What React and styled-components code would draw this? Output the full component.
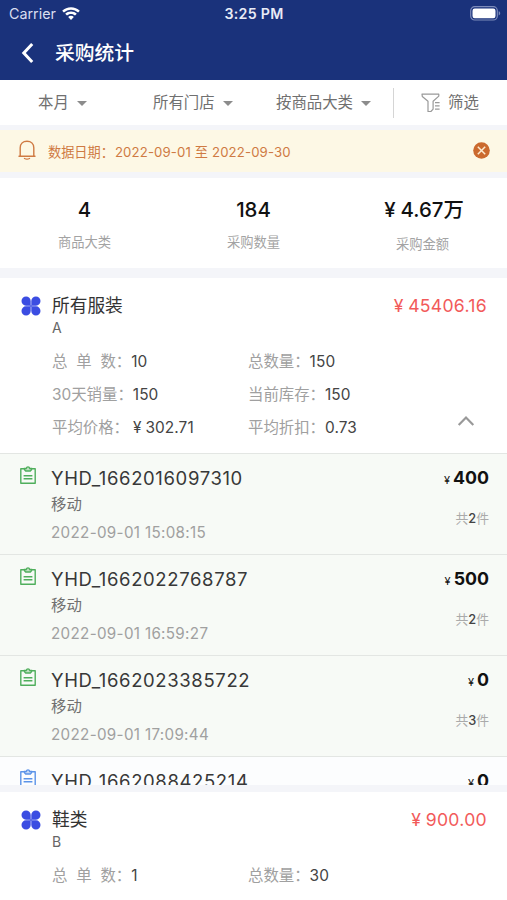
import React from 'react'
import styled, { createGlobalStyle } from 'styled-components'

const filters = [
    { label: '本月', width: 124, pad: 38 },
    { label: '所有门店', width: 138, pad: 29 },
    { label: '按商品大类', width: 131, pad: 14 },
]

const stats = [
    { value: '4', label: '商品大类' },
    { value: '184', label: '采购数量' },
    { value: '4.67万', label: '采购金额', money: true },
]

const categories = [
    {
        name: '所有服装',
        code: 'A',
        amount: '45406.16',
        open: true,
        fields: [
            { label: '总 单 数：', value: '10', spaced: true },
            { label: '总数量：', value: '150' },
            { label: '30天销量：', value: '150' },
            { label: '当前库存：', value: '150' },
            { label: '平均价格：', value: '302.71', money: true },
            { label: '平均折扣：', value: '0.73' },
        ],
        orders: [
            { id: 'YHD_1662016097310', type: '移动', time: '2022-09-01 15:08:15', amount: '400', count: 2 },
            { id: 'YHD_1662022768787', type: '移动', time: '2022-09-01 16:59:27', amount: '500', count: 2 },
            { id: 'YHD_1662023385722', type: '移动', time: '2022-09-01 17:09:44', amount: '0', count: 3 },
            { id: 'YHD_1662088425214', amount: '0', pending: true },
        ],
    },
    {
        name: '鞋类',
        code: 'B',
        amount: '900.00',
        fields: [
            { label: '总 单 数：', value: '1', spaced: true },
            { label: '总数量：', value: '30' },
        ],
        orders: [],
    },
]

const WifiIcon = () => (
    <svg width="18" height="14" viewBox="0 0 18 14" fill="#fff">
        <path d="M9 0.3C5.6 0.3 2.5 1.6 0.2 3.8L1.9 5.6C3.8 3.8 6.3 2.7 9 2.7s5.2 1.1 7.1 2.9l1.7-1.8C15.5 1.6 12.4 0.3 9 0.3z" />
        <path d="M9 4.5C6.7 4.5 4.7 5.4 3.2 6.8L5 8.6C6 7.6 7.4 7 9 7s3 .6 4 1.6l1.8-1.8C13.3 5.4 11.3 4.5 9 4.5z" />
        <path d="M9 8.800c-1.100 0-2.100.4-2.800 1.100L9 13l2.800-3.100C11.100 9.200 10.100 8.800 9 8.800z" />
    </svg>
)

const BatteryIcon = () => (
    <svg width="31" height="15" viewBox="0 0 31 15" fill="none">
        <rect x="0.7" y="0.7" width="26.6" height="13.3" rx="4" stroke="#7d8bba" strokeWidth="1.2" />
        <rect x="2.5" y="2.5" width="23" height="9.7" rx="2.2" fill="#fff" />
        <path d="M28.7 5.2v4.300c1-.4 1.500-1.200 1.500-2.150s-.5-1.750-1.500-2.150z" fill="#7d8bba" />
    </svg>
)

const BackIcon = () => (
    <svg width="14" height="22" viewBox="0 0 14 22" fill="none">
        <path d="M12.200 2L3.800 11l8.400 9" stroke="#fff" strokeWidth="3" />
    </svg>
)

const FunnelIcon = () => (
    <svg width="20" height="20" viewBox="0 0 20 20" fill="none" stroke="#999" strokeWidth="1.2">
        <path d="M1 1.200h16.800v1.900l-5.700 5.200v7.900l-2.200 2.300H7V8.300L1.300 3.500z" strokeLinejoin="round" />
        <path d="M14 9.700h4.600M14 12.900h4.600M14 16.100h4.600" />
    </svg>
)

const BellIcon = () => (
    <svg width="18" height="20" viewBox="0 0 18 20" fill="none" stroke="#cf7a43" strokeWidth="1.4">
        <path d="M1 16.200h16M2.200 16.200V7.800C2.200 3.700 5 1.200 9 1.200s6.800 2.500 6.800 6.600v8.400" strokeLinecap="round" />
        <path d="M6.500 18.500c1.500.8 3.500.8 5 0" strokeLinecap="round" />
    </svg>
)

const CloseIcon = () => (
    <svg width="17" height="17" viewBox="0 0 17 17">
        <circle cx="8.5" cy="8.5" r="8.3" fill="#cb6a2e" />
        <path d="M4.800 4.800l7.400 7.400M12.200 4.800l-7.400 7.400" stroke="#fdebd0" strokeWidth="1.5" />
    </svg>
)

const CloverIcon = () => (
    <svg width="20" height="20" viewBox="0 0 20 20" fill="#3b4de2">
        <path d="M9.700 9.700H5A4.600 4.600 0 1 1 9.700 5zM10.300 9.700V5A4.600 4.600 0 1 1 15 9.700zM9.700 10.300V15A4.600 4.600 0 1 1 5 10.300zM10.300 10.300H15A4.600 4.600 0 1 1 10.300 15z" />
        <path d="M9 9h2v2H9z" opacity="0.6" />
    </svg>
)

const ClipboardIcon = ({ color }) => (
    <svg width="16" height="19" viewBox="0 0 16 19" fill="none" stroke={color} strokeWidth="1.4">
        <path d="M4.300 2.700H.8v14.600h14.400V2.700h-3.500" strokeLinejoin="round" />
        <path d="M4.500 2.500h1.700C6.500 1.500 7.100.9 8 .9s1.500.6 1.800 1.600h1.700v1.300L10.300 5H5.700L4.500 3.800z" fill={color} fillOpacity="0.35" />
        <path d="M3.600 9.700h8.800M3.600 12.800h8.800" />
    </svg>
)

const ChevronUp = () => (
    <svg width="18" height="12" viewBox="0 0 18 12" fill="none">
        <path d="M1.700 10L9 2.500l7.300 7.500" stroke="#999" strokeWidth="2.2" />
    </svg>
)

const Order = ({ order }) => (
    <OrderRow $pending={order.pending}>
        <OrderIcon>
            <ClipboardIcon color={order.pending ? '#5b93e8' : '#4fae5c'} />
        </OrderIcon>
        <OrderInfo>
            <OrderId>{order.id}</OrderId>
            {order.type && <OrderType>{order.type}</OrderType>}
            {order.time && <OrderTime>{order.time}</OrderTime>}
        </OrderInfo>
        <OrderSide>
            <OrderAmount><small>¥</small>{order.amount}</OrderAmount>
            {order.count && <OrderCount>共<b>{order.count}</b>件</OrderCount>}
        </OrderSide>
    </OrderRow>
)

const Category = ({ category }) => (
    <>
        <Card $open={category.open}>
            <CardIcon><CloverIcon /></CardIcon>
            <CardBody>
                <CardHead>
                    <CardName>{category.name}</CardName>
                    <CardAmount><Yen>¥</Yen>{category.amount}</CardAmount>
                </CardHead>
                <CardCode>{category.code}</CardCode>
                <Fields>
                    {category.fields.map((field) => (
                        <Field key={field.label}>
                            <FieldLabel $spaced={field.spaced}>{field.label}</FieldLabel>
                            <FieldValue $money={field.money}>{field.money && <Yen>¥</Yen>}{field.value}</FieldValue>
                        </Field>
                    ))}
                </Fields>
                {category.open && <Toggle type="button"><ChevronUp /></Toggle>}
            </CardBody>
        </Card>
        {category.orders.length > 0 && (
            <OrderList>
                {category.orders.map((order) => <Order key={order.id} order={order} />)}
            </OrderList>
        )}
    </>
)

const App = () => {
    return (
        <Screen>
            <GlobalStyle />
            <Header>
                <StatusBar>
                    <Carrier>Carrier <WifiIcon /></Carrier>
                    <Clock>3:25 PM</Clock>
                    <Battery><BatteryIcon /></Battery>
                </StatusBar>
                <NavBar>
                    <BackIcon />
                    <h1>采购统计</h1>
                </NavBar>
            </Header>
            <FilterBar>
                {filters.map((filter) => (
                    <FilterItem key={filter.label} $width={filter.width} $pad={filter.pad}>
                        {filter.label}
                        <Caret />
                    </FilterItem>
                ))}
                <FilterButton>
                    <FunnelIcon />
                    筛选
                </FilterButton>
            </FilterBar>
            <Notice>
                <BellIcon />
                <p>数据日期：<span>2022-09-01 至 2022-09-30</span></p>
                <CloseIcon />
            </Notice>
            <Summary>
                {stats.map((stat) => (
                    <Stat key={stat.label} $money={stat.money}>
                        <strong>{stat.money && <Yen>¥</Yen>}{stat.value}</strong>
                        <span>{stat.label}</span>
                    </Stat>
                ))}
            </Summary>
            {categories.map((category) => <Category key={category.name} category={category} />)}
        </Screen>
    )
}

const GlobalStyle = createGlobalStyle`
    * {
        box-sizing: border-box;
    }
    body {
        margin: 0;
        overflow: hidden;
        background: #f4f5f9;
    }
    svg {
        display: block;
        flex: none;
    }
`

const Screen = styled.main`
    width: 507px;
    height: 900px;
    overflow: hidden;
    display: flex;
    flex-direction: column;
    background: #f4f5f9;
    color: #333;
    font-family: Inter, "Noto Sans CJK SC", sans-serif;
    > * {
        flex: none;
    }
`

const Header = styled.header`
    height: 80px;
    background: #1a327b;
    color: #fff;
`

const StatusBar = styled.div`
    height: 27px;
    display: grid;
    grid-template-columns: 1fr auto 1fr;
    align-items: center;
    padding: 0 6px 0 9px;
    line-height: 27px;
`

const Carrier = styled.div`
    display: flex;
    align-items: center;
    gap: 6px;
    color: #d9def0;
    font-size: 14.3px;
`

const Clock = styled.div`
    margin-right: 2px;
    font-size: 14.2px;
    font-weight: 600;
    letter-spacing: 0.3px;
    color: #e8ebf6;
`

const Battery = styled.div`
    justify-self: end;
`

const NavBar = styled.div`
    height: 53px;
    display: flex;
    align-items: center;
    padding: 0 0 1px 20px;
    h1 {
        margin: 0 0 0 21px;
        font-size: 19.8px;
        font-weight: 500;
        line-height: 30px;
    }
`

const FilterBar = styled.nav`
    height: 45px;
    display: flex;
    align-items: center;
    background: #fff;
    color: #707070;
    font-size: 15.4px;
    line-height: 24px;
`

const FilterItem = styled.div`
    width: ${({ $width }) => $width}px;
    padding-left: ${({ $pad }) => $pad}px;
    display: flex;
    align-items: center;
    gap: 8px;
`

const Caret = styled.i`
    border: 5px solid transparent;
    border-top-color: #8c8c8c;
    border-bottom: 0;
    margin-top: 1px;
`

const FilterButton = styled.div`
    flex: 1;
    height: 30px;
    display: flex;
    align-items: center;
    gap: 7px;
    padding-left: 27px;
    border-left: 1px solid #d5d5d5;
`

const Notice = styled.div`
    height: 42px;
    margin: 5px 0 6px;
    padding: 0 17px 2px 18px;
    display: flex;
    align-items: center;
    background: #fdf8e5;
    color: #cf7a43;
    font-size: 13.2px;
    p {
        flex: 1;
        margin: 4px 0 0 12px;
        line-height: 20px;
    }
    span {
        margin-left: 1px;
        letter-spacing: 0.13px;
    }
`

const Summary = styled.section`
    height: 90px;
    margin-bottom: 10px;
    display: grid;
    grid-template-columns: repeat(3, 169px);
    background: #fff;
`

const Stat = styled.div`
    display: flex;
    flex-direction: column;
    align-items: center;
    padding-top: 18px;
    strong {
        padding-left: ${({ $money }) => ($money ? 3 : 0)}px;
        color: #111;
        font-size: 20.4px;
        font-weight: 500;
        line-height: 28px;
        white-space: nowrap;
    }
    span {
        margin-top: ${({ $money }) => ($money ? 10 : 8)}px;
        color: #a3a3a3;
        font-size: 13.3px;
        line-height: 20px;
    }
`

const Yen = styled.em`
    margin-right: 0.25em;
    font-style: normal;
`

const Card = styled.section`
    position: relative;
    height: ${({ $open }) => ($open ? 175 : 108)}px;
    display: flex;
    background: #fff;
`

const CardIcon = styled.div`
    width: 52px;
    padding: 18px 0 0 21px;
`

const CardBody = styled.div`
    flex: 1;
    padding: 15px 20px 0 0;
`

const CardHead = styled.div`
    display: flex;
    justify-content: space-between;
    line-height: 26px;
`

const CardName = styled.h2`
    margin: 0;
    font-size: 17.7px;
    font-weight: 400;
`

const CardAmount = styled.div`
    color: #f25a5a;
    font-size: 17.6px;
    letter-spacing: 0.3px;
`

const CardCode = styled.div`
    color: #666;
    font-size: 14px;
    line-height: 17px;
`

const Fields = styled.div`
    margin-top: 10px;
    display: grid;
    grid-template-columns: 196px 1fr;
`

const Field = styled.div`
    height: 33px;
    display: flex;
    align-items: baseline;
    font-size: 15.4px;
    line-height: 31px;
    white-space: nowrap;
`

const FieldLabel = styled.span`
    color: #a0a0a0;
    word-spacing: ${({ $spaced }) => ($spaced ? '4.5px' : '0')};
`

const FieldValue = styled.span`
    margin-left: ${({ $money }) => ($money ? 4 : 0)}px;
    color: #444;
    letter-spacing: 0.1px;
`

const Toggle = styled.button`
    position: absolute;
    right: 32px;
    bottom: 26px;
    padding: 0;
    border: 0;
    background: none;
`

const OrderList = styled.div`
    height: 332px;
    margin-bottom: 7px;
    overflow: hidden;
`

const OrderRow = styled.article`
    height: 101px;
    display: flex;
    padding-right: 18px;
    border-top: 1px solid #e3e6e3;
    background: ${({ $pending }) => ($pending ? '#fcfdfe' : '#f7faf6')};
`

const OrderIcon = styled.div`
    width: 51px;
    padding: 12px 0 0 20px;
`

const OrderInfo = styled.div`
    flex: 1;
    padding-top: 10px;
`

const OrderId = styled.div`
    color: #383838;
    font-size: 18.5px;
    letter-spacing: 0.62px;
    line-height: 28px;
`

const OrderType = styled.div`
    color: #707070;
    font-size: 15.4px;
    line-height: 26px;
`

const OrderTime = styled.div`
    color: #a0a0a0;
    font-size: 15.2px;
    letter-spacing: 0.32px;
    line-height: 29px;
`

const OrderSide = styled.div`
    padding-top: 10px;
    text-align: right;
`

const OrderAmount = styled.div`
    color: #111;
    font-size: 17.8px;
    font-weight: 700;
    line-height: 28px;
    small {
        margin-right: 3px;
        font-size: 11px;
        font-weight: 400;
    }
`

const OrderCount = styled.div`
    margin-top: 13px;
    color: #aaa;
    font-size: 12.8px;
    line-height: 24px;
    b {
        color: #444;
        font-weight: 500;
    }
`

export default App
